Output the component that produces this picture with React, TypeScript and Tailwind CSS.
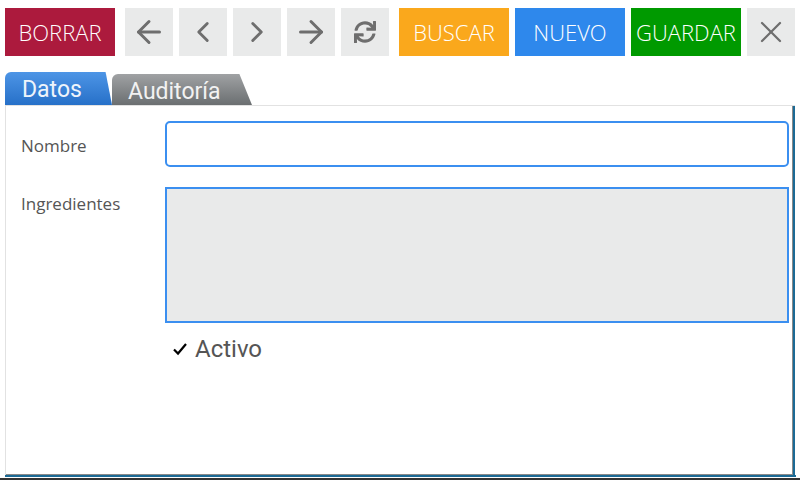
import React from "react";
import { ArrowLeft, ArrowRight, ChevronLeft, ChevronRight, X } from "lucide-react";
import { FaSync } from "react-icons/fa";

const textBtn = "h-12 w-[110px] flex items-center justify-center text-white font-light text-[22px]";
const iconBtn = "h-12 w-12 flex items-center justify-center bg-[#e9eaea] text-[#6e6e6e]";

export default function App() {
  return (
    <div
      className="w-[800px] h-[480px] bg-white flex flex-col overflow-hidden"
      style={{ fontFamily: '"Open Sans", "Liberation Sans", sans-serif' }}
    >
      {/* toolbar */}
      <div className="flex items-center px-[5px] pt-2 gap-[6px]">
        <button className={`${textBtn} bg-[#ac1a3d] mr-1`}>BORRAR</button>
        <button className={iconBtn}>
          <ArrowLeft size={36} strokeWidth={2} />
        </button>
        <button className={iconBtn}>
          <ChevronLeft size={34} strokeWidth={2} />
        </button>
        <button className={iconBtn}>
          <ChevronRight size={34} strokeWidth={2} />
        </button>
        <button className={iconBtn}>
          <ArrowRight size={36} strokeWidth={2} />
        </button>
        <button className={`${iconBtn} mr-1`}>
          <FaSync size={22} />
        </button>
        <button className={`${textBtn} bg-[#faa81c]`}>BUSCAR</button>
        <button className={`${textBtn} bg-[#2e88ec]`}>NUEVO</button>
        <button className={`${textBtn} bg-[#009a00]`}>GUARDAR</button>
        <button className={iconBtn}>
          <X size={36} strokeWidth={1.5} />
        </button>
      </div>

      {/* tabs */}
      <div
        className="flex items-end h-[33px] mt-4 px-[5px]"
        style={{ fontFamily: 'Roboto, "Noto Sans", sans-serif' }}
      >
        <div className="h-[33px] w-[107px] rounded-tl-md rounded-tr-sm bg-gradient-to-b from-[#4d95e6] to-[#2670c8] text-[#eef4fb] text-[23px] pl-[17px] leading-[35px] [clip-path:polygon(0_0,94%_0,100%_100%,0_100%)]">
          Datos
        </div>
        <div className="h-[31px] w-[140px] rounded-tl-md rounded-tr-sm bg-gradient-to-b from-[#a0a2a4] to-[#6b6f71] text-[#f2f2f2] text-[23px] pl-4 leading-[35px] [clip-path:polygon(0_0,91%_0,100%_100%,0_100%)]">
          Auditoría
        </div>
      </div>

      {/* panel */}
      <div className="mx-[5px] h-[370px] border-l border-t border-[#e2e2e2] flex">
        <div className="flex-1 flex flex-col border-r border-b border-[#8a8a8a]">
          <div className="flex-1 flex flex-col pl-[15px] pr-[3px] pt-[15px]">
            <div className="flex items-center">
              <label className="w-[144px] text-[17px] text-[#555] pt-[3px]">Nombre</label>
              <input className="flex-1 h-[46px] rounded-[5px] border-2 border-[#3b8ff0] bg-white outline-none" />
            </div>
            <div className="flex mt-5">
              <label className="w-[144px] text-[17px] text-[#555] pt-[4px]">Ingredientes</label>
              <textarea className="flex-1 h-[136px] border-2 border-[#3b8ff0] bg-[#e9eaea] outline-none resize-none" />
            </div>
            <div
              className="flex items-center mt-[10px] pl-[151px] h-[32px]"
              style={{ fontFamily: 'Roboto, "Noto Sans", sans-serif' }}
            >
              <svg width="16" height="16" viewBox="0 0 16 16" className="mr-[7px]">
                <path d="M2 8.5 L6 12.5 L14 3" fill="none" stroke="#000" strokeWidth="2.2" />
              </svg>
              <span className="text-[24px] text-[#555]">Activo</span>
            </div>
          </div>
        </div>
        <div className="w-[2px] bg-[#1b6a95]" />
      </div>
      <div className="mx-[5px] h-[2px] bg-[#1b6a95] mr-[4px]" />
      <div className="flex-1" />
      <div className="h-[2px] bg-[#333]" />
    </div>
  );
}
